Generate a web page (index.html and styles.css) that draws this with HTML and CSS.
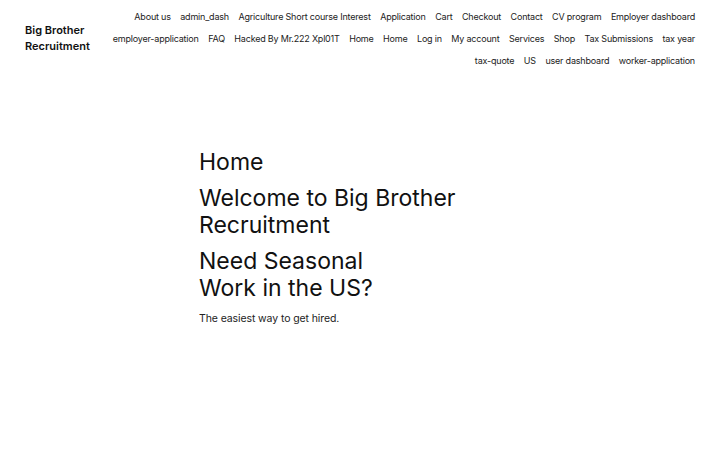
FILE: index.html
```html
<!DOCTYPE html>
<html lang="en">
<head>
<meta charset="utf-8">
<title>Big Brother Recruitment</title>
<link rel="stylesheet" href="styles.css">
</head>
<body>
<header class="site-header">
  <div class="site-title">Big Brother<br>Recruitment</div>
  <nav class="site-nav">
    <a>About us</a><a>admin_dash</a><a>Agriculture Short course Interest</a><a>Application</a><a>Cart</a><a>Checkout</a><a>Contact</a><a>CV program</a><a>Employer dashboard</a><a>employer-application</a><a>FAQ</a><a>Hacked By Mr.222 Xpl01T</a><a>Home</a><a>Home</a><a>Log in</a><a>My account</a><a>Services</a><a>Shop</a><a>Tax Submissions</a><a>tax year</a><a>tax-quote</a><a>US</a><a>user dashboard</a><a>worker-application</a>
  </nav>
</header>
<main class="content">
  <h1 class="page-title">Home</h1>
  <h2 class="heading">Welcome to Big Brother<br>Recruitment</h2>
  <h2 class="heading">Need Seasonal<br>Work in the US?</h2>
  <p class="lead">The easiest way to get hired.</p>
</main>
</body>
</html>
```
FILE: styles.css
```css
html, body {
  margin: 0;
  padding: 0;
  background: #ffffff;
  color: #111111;
  font-family: "Inter", "Noto Sans", sans-serif;
}
.site-header {
  display: flex;
  justify-content: space-between;
  align-items: flex-start;
  padding: 6px 25px 0 25px;
  gap: 20px;
}
.site-title {
  font-size: 11px;
  font-weight: 600;
  line-height: 16px;
  white-space: nowrap;
  padding-top: 16px;
}
.site-nav {
  display: flex;
  flex-wrap: wrap;
  justify-content: flex-end;
  column-gap: 9.5px;
  font-size: 9px;
  line-height: 22px;
  letter-spacing: -0.2px;
  color: #222;
}
.site-nav a {
  white-space: nowrap;
}
.content {
  padding: 77px 0 0 199px;
  width: 320px;
}
.page-title {
  margin: 0;
  font-size: 23px;
  font-weight: 400;
  line-height: 27px;
}
.heading {
  margin: 9px 0 0 0;
  font-size: 23px;
  font-weight: 400;
  line-height: 27px;
}
.lead {
  margin: 8px 0 0 0;
  font-size: 10.5px;
  line-height: 18px;
  letter-spacing: -0.1px;
  color: #222;
}
```
